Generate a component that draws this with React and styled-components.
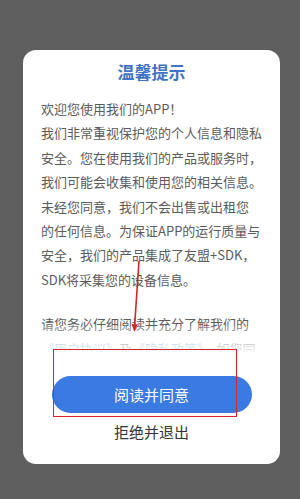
import React from "react";
import styled, { createGlobalStyle } from "styled-components";

const Global = createGlobalStyle`
  html, body { margin: 0; padding: 0; }
  body {
    width: 300px; height: 499px; overflow: hidden;
    background: #5f5f5f;
    font-family: "Noto Sans CJK SC", "Noto Sans", sans-serif;
  }
`;

const Screen = styled.div`
  position: relative;
  width: 300px;
  height: 499px;
  box-sizing: border-box;
  padding: 50px 20px 0 23px;
`;

const Card = styled.div`
  width: 257px;
  height: 414px;
  box-sizing: border-box;
  background: #fff;
  border-radius: 13px;
  padding: 10px 18px 22px;
  display: flex;
  flex-direction: column;
  align-items: center;
`;

const Title = styled.div`
  font-size: 17px;
  line-height: 24px;
  font-weight: 700;
  color: #3f73c3;
`;

const Content = styled.div`
  position: relative;
  margin-top: 13px;
  height: 255px;
  width: 100%;
  overflow: hidden;
  font-size: 13px;
  line-height: 24.4px;
  color: #5c5c5c;
`;

const Para = styled.div`
  margin: 0 0 ${(p) => p.$gap || 0}px;
`;

const Line = styled.div`
  white-space: nowrap;
`;

const Link = styled.span`
  color: #5d97d6;
`;

const Fade = styled.div`
  position: absolute;
  left: 0; right: 0; bottom: 0;
  height: 26px;
  background: linear-gradient(rgba(255,255,255,0.2), rgba(255,255,255,0.9));
`;

const AgreeButton = styled.button`
  margin-top: 24px;
  width: 200px;
  height: 37px;
  border: none;
  border-radius: 19px;
  background: #3b7ae0;
  color: #fff;
  font-family: inherit;
  font-size: 15px;
  padding: 0;
`;

const Refuse = styled.div`
  margin-top: 9px;
  font-size: 15px;
  line-height: 20px;
  color: #333;
`;

const RedBox = styled.div`
  position: absolute;
  left: 53px;
  top: 349px;
  width: 184px;
  height: 68px;
  box-sizing: border-box;
  border: 1.5px solid #d2272a;
`;

const ArrowSvg = styled.svg`
  position: absolute;
  left: 0;
  top: 0;
  pointer-events: none;
`;

const intro = [
  "我们非常重视保护您的个人信息和隐私",
  "安全。您在使用我们的产品或服务时，",
  "我们可能会收集和使用您的相关信息。",
  "未经您同意，我们不会出售或出租您",
  "的任何信息。为保证APP的运行质量与",
  "安全，我们的产品集成了友盟+SDK，",
  "SDK将采集您的设备信息。",
];

export default function App() {
  return (
    <>
      <Global />
      <Screen>
        <Card>
          <Title>温馨提示</Title>
          <Content>
            <Para>
              <Line>欢迎您使用我们的APP！</Line>
            </Para>
            <Para $gap={20}>
              {intro.map((t) => (
                <Line key={t}>{t}</Line>
              ))}
            </Para>
            <Para>
              <Line>请您务必仔细阅读并充分了解我们的</Line>
              <Line>
                <Link>《用户协议》</Link>及<Link>《隐私政策》</Link>，如您同
              </Line>
              <Line>意，请点击下方按钮开始使用。</Line>
            </Para>
            <Fade />
          </Content>
          <AgreeButton>阅读并同意</AgreeButton>
          <Refuse>拒绝并退出</Refuse>
        </Card>
        <RedBox />
        <ArrowSvg width="300" height="499" viewBox="0 0 300 499">
          <line x1="139" y1="261" x2="134.6" y2="326" stroke="#d2272a" strokeWidth="1.6" />
          <polygon points="131.6,324 137.8,324.4 134.3,332" fill="#d2272a" />
        </ArrowSvg>
      </Screen>
    </>
  );
}
